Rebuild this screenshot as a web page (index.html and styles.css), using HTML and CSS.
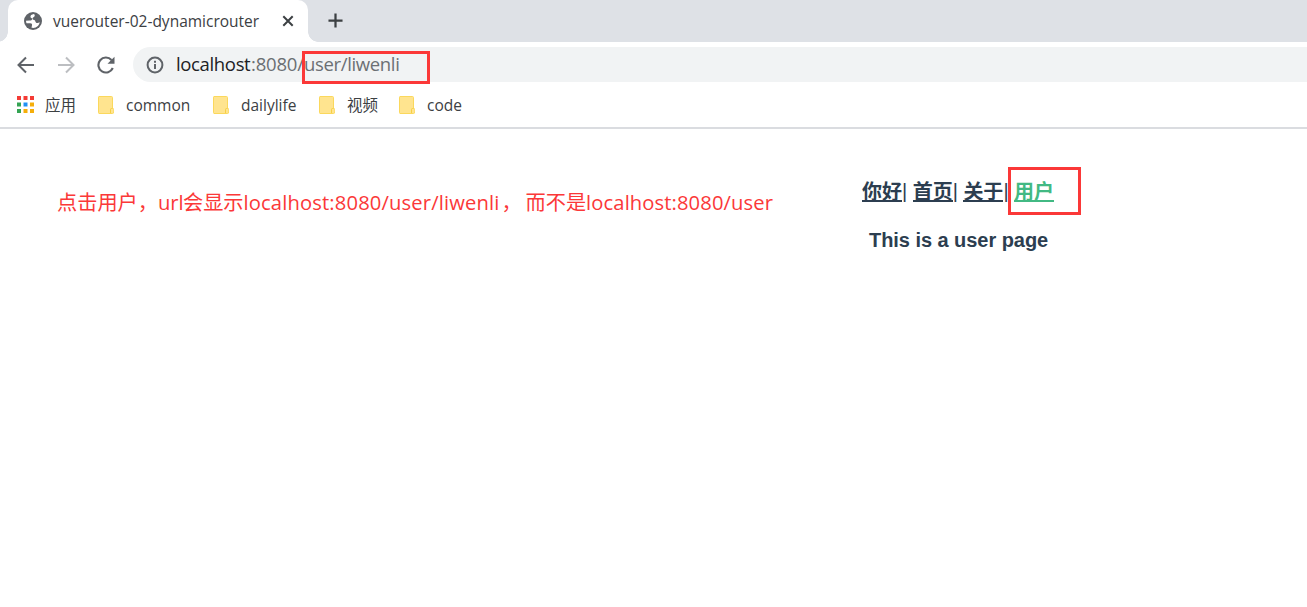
FILE: index.html
```
<!DOCTYPE html>
<html lang="zh">
<head>
<meta charset="utf-8">
<title>vuerouter-02-dynamicrouter</title>
<link rel="stylesheet" href="styles.css">
</head>
<body>
<svg class="defs" width="0" height="0">
  <symbol id="folder" viewBox="0 0 16 18">
    <path d="M1 .5h12.500a1 1 0 0 1 1 1V12.500h.3a1 1 0 0 1 1 1V16a1.500 1.500 0 0 1-1.500 1.500H1a.8.8 0 0 1-.5-.8V1.200A.7.7 0 0 1 1 .5z" fill="#ffe48f" stroke="#fbd85c"/>
    <path d="M12.500 17v-3.500a1 1 0 0 1 1-1h1" fill="none" stroke="#f7cf45"/>
  </symbol>
</svg>
<header class="tabstrip">
  <div class="tab">
    <svg class="globe" viewBox="0 0 18 18"><circle cx="9" cy="9" r="9" fill="#5f6368"/><path d="M10 2C7.500 2.300 6.200 3.500 6.500 5c.3 1.200 1.500.8 1.600 2 0 1.200-1.100 1.500-2.300 1.600L2 8.800c0 .9.200 1.700.5 2.400h3.700c1.500.1 2.100.8 1.800 2l-.5 2.600c2.500.5 4.700-.2 6.300-1.800 1-1 1.700-2.300 1.900-3.700-1.100.8-2.600 1.100-3.600.4-1-.7-.5-1.700-1.400-2.400-.7-.6-1.900-.3-2.200-1.300-.3-1.200.8-1.800 1.700-2.300C11 4 11 3 10 2z" fill="#fff"/></svg>
    <span class="title">vuerouter-02-dynamicrouter</span>
    <svg class="close" viewBox="0 0 12 12"><path d="M1.300 1.300l9.400 9.400M10.700 1.300l-9.400 9.400" stroke="#3c4043" stroke-width="2"/></svg>
  </div>
  <svg class="plus" viewBox="0 0 16 16"><path d="M8 .5v15M.5 8h15" stroke="#3c4043" stroke-width="2.400"/></svg>
</header>
<div class="toolbar">
  <svg class="nav" viewBox="0 0 18 18"><path d="M17 9H2M9 1.500L1.500 9 9 16.500" fill="none" stroke="#5f6368" stroke-width="2"/></svg>
  <svg class="nav" viewBox="0 0 18 18"><path d="M1 9h15M9 1.500L16.500 9 9 16.500" fill="none" stroke="#bcbec1" stroke-width="2"/></svg>
  <svg class="nav" viewBox="0 0 18 18"><path d="M15.800 12A7.500 7.500 0 1 1 14.500 4" fill="none" stroke="#5f6368" stroke-width="2.100"/><path d="M17.500.8v7h-7z" fill="#5f6368"/></svg>
  <div class="address">
    <svg class="info" viewBox="0 0 18 18"><circle cx="9" cy="9" r="7.400" fill="none" stroke="#5f6368" stroke-width="2"/><path d="M9 8v5M9 4.800v2" stroke="#5f6368" stroke-width="2"/></svg>
    <div class="url"><b>localhost</b><span class="port">:8080/</span><span class="path">user/liwenli<i class="mark"></i></span></div>
  </div>
</div>
<nav class="bookmarks">
  <svg class="apps" viewBox="0 0 17 17"><path d="M0 0h4v4H0zM6.500 0h4v4h-4zM13 0h4v4h-4z" fill="#f43b35"/><path d="M0 6.500h4v4H0zM0 13h4v4H0z" fill="#34a453"/><path d="M6.500 6.500h4v4h-4z" fill="#1e90f5"/><path d="M13 6.500h4v4h-4zM6.500 13h4v4h-4zM13 13h4v4h-4z" fill="#f5ae0a"/></svg>
  <span class="label apps-label">应用</span>
  <svg class="folder"><use href="#folder"/></svg><span class="label common">common</span>
  <svg class="folder"><use href="#folder"/></svg><span class="label daily">dailylife</span>
  <svg class="folder"><use href="#folder"/></svg><span class="label video">视频</span>
  <svg class="folder"><use href="#folder"/></svg><span class="label code">code</span>
</nav>
<main class="page">
  <p class="note"><span>点击用户，</span><span class="n1">url</span><span>会显示</span><span class="n2">localhost:8080/user/liwenli</span><span class="pause">，</span><span>而不是</span><span class="n3">localhost:8080/user</span></p>
  <section class="app">
    <div class="links"><a>你好</a><span>|</span><a>首页</a><span>|</span><a>关于</a><span>|</span><a class="active">用户<i class="mark"></i></a></div>
    <h1>This is a user page</h1>
  </section>
</main>
</body>
</html>
```
FILE: styles.css
```
* { box-sizing: border-box; }
body { margin: 0; height: 607px; overflow: hidden; background: #fff; font-family: "Open Sans", "Noto Sans CJK SC", sans-serif; color: #3c4043; }
svg { flex: none; display: block; }
.defs { position: absolute; }
.tabstrip { display: flex; height: 42px; background: #dee1e6; padding-left: 8px; }
.tab { position: relative; display: flex; align-items: center; width: 300px; height: 42px; padding-left: 16px; background: #fff; border-radius: 10px 10px 0 0; }
.tab::before, .tab::after { content: ""; position: absolute; bottom: 0; width: 10px; height: 10px; }
.tab::before { left: -10px; background: radial-gradient(circle at 0 0, #dee1e6 9.500px, #fff 10px); }
.tab::after { right: -10px; background: radial-gradient(circle at 100% 0, #dee1e6 9.500px, #fff 10px); }
.globe { width: 18px; height: 18px; }
.title { width: 206px; margin-left: 11px; font-size: 15.500px; line-height: 43px; white-space: nowrap; }
.close { width: 12px; height: 12px; margin-left: 23px; }
.plus { width: 15px; height: 15px; margin: 13px 0 0 20px; }
.toolbar { display: flex; align-items: center; gap: 22px; height: 45px; padding-left: 17px; }
.nav { width: 18px; height: 18px; }
.address { display: flex; align-items: center; flex: 1; height: 35px; margin-left: -4px; padding-left: 13px; border-radius: 18px 0 0 18px; background: #f1f3f4; }
.info { width: 18px; height: 18px; }
.url { display: flex; margin: -2px 0 0 12px; font-size: 18.500px; line-height: 34px; letter-spacing: -0.35px; white-space: nowrap; color: #6b6f73; }
.url b { width: 75px; font-weight: 400; color: #202124; }
.port { width: 53px; letter-spacing: -0.2px; }
.path { position: relative; }
.mark { position: absolute; border: 3px solid #fb3838; }
.path .mark { left: -2px; top: 4px; width: 128px; height: 33px; }
.bookmarks { display: flex; align-items: center; height: 42px; padding: 0 0 4px 17px; border-bottom: 2px solid #dadce0; }
.apps { width: 17px; height: 17px; margin-top: -1px; }
.label { margin-left: 12px; font-size: 15.500px; line-height: 24px; white-space: nowrap; }
.apps-label { width: 53px; margin-left: 11px; }
.folder { width: 16px; height: 18px; }
.common { width: 87px; }
.daily { width: 78px; }
.video { width: 52px; }
.page { display: flex; height: 478px; }
.note { display: flex; width: 862px; margin: 57px 0 0; padding-left: 57px; font-size: 20.200px; line-height: 32px; white-space: nowrap; color: #fb3838; }
.n1 { width: 25px; }
.n2 { width: 258px; letter-spacing: 0.14px; }
.pause { width: 24px; }
.n3 { letter-spacing: 0.1px; }
.app { padding-top: 48px; font-family: "Liberation Sans", "Noto Sans CJK SC", sans-serif; color: #2c3e50; }
.links { display: flex; font-size: 20px; line-height: 30px; font-weight: 700; }
.links a { position: relative; width: 40px; height: 25px; border-bottom: 2px solid currentColor; }
.links span { width: 10.700px; height: 25px; font-weight: 400; line-height: 28px; }
.links .active { color: #42b983; }
.active .mark { left: -6px; top: -10px; width: 73px; height: 48px; }
h1 { margin: 26px 0 0 7px; font-size: 20px; line-height: 24px; letter-spacing: -0.05px; white-space: nowrap; }
```
